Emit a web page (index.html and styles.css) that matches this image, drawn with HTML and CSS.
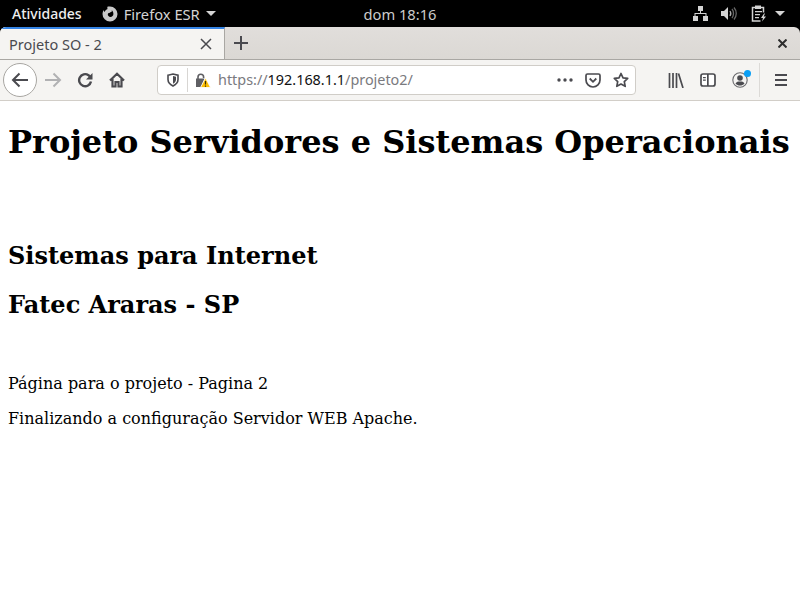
FILE: index.html
```html
<!DOCTYPE html>
<html lang="pt-BR">
<head>
    <meta charset="UTF-8">
    <title>Projeto SO - 2</title>
    <link rel="stylesheet" href="styles.css">
</head>
<body>
    <!-- GNOME top bar -->
    <header class="topbar">
        <div class="topbar-left">
            <span class="activities">Atividades</span>
            <span class="app-menu">
                <svg class="app-icon" width="16" height="16" viewBox="0 0 16 16"><path fill="#c9c9c9" fill-rule="evenodd" d="M8 .5A7.500 7.500 0 1 1 .5 8c0-1.500.4-2.800 1.200-4 .1 1 .5 1.700 1 2C3.100 4.500 4.400 3.300 5.600 3c-.5-.9-.4-1.800.2-2.500C6.500.5 7.200.5 8 .5zM9.500 4c.8 1 .4 1.800-.5 2-.8.200-1.400.5-1.500 1-.7-.2-1.500.3-1.700 1.100C5.600 9.700 6.900 11 8.400 11c1.700 0 3-1.400 3-3 0-1.700-.7-3.200-1.900-4z"/></svg>
                <span>Firefox ESR</span>
                <span class="caret"></span>
            </span>
        </div>
        <div class="clock">dom 18:16</div>
        <div class="topbar-right">
            <svg class="tray-net" width="15" height="15" viewBox="0 0 15 15"><path fill="#d4d4d4" d="M5 0h5v5H8v2h5.500v3H15v5H10v-5h2.500V8h-10v2H5v5H0v-5h1.500V7H7V5H5z"/></svg>
            <svg class="tray-vol" width="16" height="15" viewBox="0 0 16 15"><path fill="#d4d4d4" d="M0 5h3l4-4v13l-4-4H0z"/><path fill="none" stroke="#aaa" stroke-width="1.300" d="M9 5c1 1.500 1 3.500 0 5"/><path fill="none" stroke="#666" stroke-width="1.300" d="M11 3c2 2.500 2 6.500 0 9M13 1.500c3 3.500 3 8.500 0 12"/></svg>
            <svg class="tray-bat" width="16" height="17" viewBox="0 0 16 17"><path fill="none" stroke="#d4d4d4" stroke-width="1.500" d="M4 2.500H1.500v13.500h8M10 2.500h2.500v5"/><path fill="#d4d4d4" d="M4 .5h6v3.500H4zM4 6h7v1.300H4zM4 9h5v1.300H4zM4 12h4v1.300H4zM13 8.500l-3 4.500h2l-1 3.500 4-5h-2.300l1.300-3z"/></svg>
            <span class="caret"></span>
        </div>
    </header>

    <!-- Firefox tab strip -->
    <div class="tabstrip">
        <div class="tab">
            <span class="tab-title">Projeto SO - 2</span>
            <svg class="icon" width="12" height="12" viewBox="0 0 12 12"><path stroke="#4a4a4f" stroke-width="1.500" d="M1 1l10 10M11 1L1 11"/></svg>
        </div>
        <div class="newtab">
            <svg class="icon" width="14" height="14" viewBox="0 0 14 14"><path stroke="#4a4a4f" stroke-width="2" d="M7 0v14M0 7h14"/></svg>
        </div>
        <div class="window-close">
            <svg class="icon" width="9" height="9" viewBox="0 0 9 9"><path stroke="#2e2e2e" stroke-width="2" d="M.5.5l8 8M8.500.5l-8 8"/></svg>
        </div>
    </div>

    <!-- Firefox nav bar -->
    <nav class="navbar">
        <div class="back">
            <svg class="icon" width="18" height="16" viewBox="0 0 18 16"><path fill="none" stroke="#4a4a4f" stroke-width="2" d="M17 8H2M8.500 1.500L2 8l6.500 6.500"/></svg>
        </div>
        <div class="navbtn">
            <svg class="icon" width="18" height="16" viewBox="0 0 18 16"><path fill="none" stroke="#b1b1b3" stroke-width="2" d="M1 8h15M9.500 1.500L16 8l-6.500 6.500"/></svg>
        </div>
        <div class="navbtn">
            <svg class="icon" width="16" height="16" viewBox="0 0 16 16"><path fill="none" stroke="#4a4a4f" stroke-width="2.400" d="M14 9.500a6 6 0 1 1-2.500-6.300L14 5.500"/><path fill="#4a4a4f" d="M15.500 1v6.500h-6.500z"/></svg>
        </div>
        <div class="navbtn">
            <svg class="icon" width="16" height="16" viewBox="0 0 16 16"><path fill="none" stroke="#4a4a4f" stroke-width="2.200" d="M1 8.500l7-6.800 7 6.800M3.500 7v7.500h3V10h3v4.500h3V7"/></svg>
        </div>

        <div class="urlbar">
            <svg class="shield" width="12" height="14" viewBox="0 0 12 14"><path fill="none" stroke="#4a4a4f" stroke-width="1.600" d="M1 2.200L6 1l5 1.200v4.300c0 3-2 5-5 6.500-3-1.500-5-3.500-5-6.500z"/><path fill="#4a4a4f" d="M6 3l3 .8v2.700c0 1.800-1.200 3.200-3 4.300z"/></svg>
            <span class="url-sep"></span>
            <svg class="lock" width="16" height="15" viewBox="0 0 16 15"><path fill="none" stroke="#5f5f63" stroke-width="1.600" d="M3 6V4a2.800 2.800 0 0 1 5.600 0v1"/><path fill="#5f5f63" d="M1 5.500h8.500L6 14H1z"/><path fill="#ffbf00" stroke="#fff" stroke-width=".8" d="M10.500 5L15.500 14.500h-10z"/><path stroke="#3a3000" stroke-width="1.200" d="M10.500 8v3.500M10.500 12.500v1.200"/></svg>
            <span class="url"><span class="url-dim">https://</span>192.168.1.1<span class="url-dim">/projeto2/</span></span>
            <svg class="url-icon dots" width="16" height="4" viewBox="0 0 16 4"><circle cx="2" cy="2" r="1.700" fill="#4a4a4f"/><circle cx="8" cy="2" r="1.700" fill="#4a4a4f"/><circle cx="14" cy="2" r="1.700" fill="#4a4a4f"/></svg>
            <svg class="url-icon" width="16" height="15" viewBox="0 0 16 15"><path fill="none" stroke="#4a4a4f" stroke-width="1.700" d="M2.500 1h11c.8 0 1.500.7 1.500 1.500V7a7 7 0 0 1-14 0V2.500C1 1.700 1.700 1 2.500 1z"/><path fill="none" stroke="#4a4a4f" stroke-width="1.800" d="M4.700 5.500L8 8.800l3.300-3.300"/></svg>
            <svg class="url-icon" width="16" height="16" viewBox="0 0 16 16"><path fill="none" stroke="#4a4a4f" stroke-width="1.700" stroke-linejoin="round" d="M8 1.500l2 4.300 4.700.6-3.400 3.200.9 4.700L8 12l-4.200 2.300.9-4.700L1.300 6.400 6 5.800z"/></svg>
        </div>

        <div class="tools">
            <div class="navbtn">
                <svg class="icon" width="16" height="15" viewBox="0 0 16 15"><path stroke="#4a4a4f" stroke-width="1.700" d="M1.500 0v15M5 0v15M8.500 0v15M10.500.500l4.500 14.500"/></svg>
            </div>
            <div class="navbtn">
                <svg class="icon" width="16" height="14" viewBox="0 0 16 14"><rect x="1" y="1" width="14" height="12" rx="2" fill="#fff" stroke="#4a4a4f" stroke-width="1.700"/><path fill="#4a4a4f" d="M7 1h1.700v12H7zM3 4h2.800v1.200H3zM3 6.500h2.800v1.200H3z"/></svg>
            </div>
            <div class="navbtn account">
                <svg class="icon" width="16" height="16" viewBox="0 0 16 16"><circle cx="8" cy="8" r="7.200" fill="none" stroke="#6a6a6e" stroke-width="1.100"/><circle cx="8" cy="6" r="2.800" fill="#4a4a4f"/><path fill="#4a4a4f" d="M3.500 11.500C4.500 9.800 6 9.500 8 9.500s3.500.3 4.500 2C11 13 9.800 13.500 8 13.500s-3-.5-4.500-2z"/></svg>
                <span class="badge"></span>
            </div>
        </div>
        <span class="tools-sep"></span>
        <div class="navbtn">
            <svg class="icon" width="14" height="12" viewBox="0 0 14 12"><path stroke="#4a4a4f" stroke-width="2" d="M1 1h12M1 6h12M1 11h12"/></svg>
        </div>
    </nav>

    <main class="page">
        <h1>Projeto Servidores e Sistemas Operacionais</h1>
        <h2 class="first">Sistemas para Internet</h2>
        <h2>Fatec Araras - SP</h2>
        <p class="first">Página para o projeto - Pagina 2</p>
        <p>Finalizando a configuração Servidor WEB Apache.</p>
    </main>
</body>
</html>
```

FILE: styles.css
```css
html, body {
    margin: 0;
    height: 100%;
    overflow: hidden;
}
body {
    background-color: #000;
    font-family: "Noto Sans", sans-serif;
    display: flex;
    flex-direction: column;
}
.icon, .url-icon, .shield, .lock, .app-icon {
    display: block;
    flex: none;
}

.topbar {
    height: 27px;
    flex: none;
    display: grid;
    grid-template-columns: 1fr auto 1fr;
    align-items: center;
    color: #d4d4d4;
    font-size: 14.7px;
}
.topbar-left {
    display: flex;
    align-items: center;
    padding-left: 12px;
}
.activities {
    color: #eee;
    font-size: 14px;
    font-weight: 500;
}
.app-menu {
    display: flex;
    align-items: center;
    margin-left: 20px;
    gap: 6px;
}
.clock {
    color: #ccc;
}
.topbar-right {
    display: flex;
    align-items: center;
    justify-content: flex-end;
    padding-right: 15px;
}
.tray-net {
    margin-right: 13px;
}
.tray-vol {
    margin-right: 14px;
}
.tray-bat {
    margin-right: 8px;
}
.caret {
    width: 0;
    height: 0;
    border-left: 5px solid transparent;
    border-right: 5px solid transparent;
    border-top: 5px solid #d4d4d4;
}

.tabstrip {
    height: 33px;
    flex: none;
    display: flex;
    background: linear-gradient(#e1dedb, #dbd8d4);
    border-bottom: 1px solid #a9a7a3;
    box-sizing: border-box;
    border-radius: 6px 6px 0 0;
    overflow: hidden;
}
.tab {
    width: 225px;
    box-sizing: border-box;
    display: flex;
    align-items: center;
    justify-content: space-between;
    padding: 0 12px 2px 9px;
    background-color: #f5f4f2;
    border-top: 2px solid #3584e4;
    border-right: 1px solid #a9a7a3;
    margin-bottom: -1px;
    color: #4a4a4f;
    font-size: 14.5px;
}
.newtab {
    width: 32px;
    display: flex;
    align-items: center;
    justify-content: center;
}
.window-close {
    margin-left: auto;
    width: 36px;
    display: flex;
    align-items: center;
    justify-content: center;
}

.navbar {
    height: 41px;
    flex: none;
    box-sizing: border-box;
    display: flex;
    align-items: center;
    padding-left: 3px;
    background-color: #f5f4f2;
    border-bottom: 1px solid #d2cec8;
}
.back {
    width: 32px;
    height: 32px;
    flex: none;
    display: flex;
    align-items: center;
    justify-content: center;
    background-color: #fff;
    border: 1px solid #a8a6a2;
    border-radius: 50%;
}
.navbtn {
    width: 32px;
    height: 32px;
    flex: none;
    display: flex;
    align-items: center;
    justify-content: center;
    position: relative;
}
.urlbar {
    width: 479px;
    height: 30px;
    flex: none;
    box-sizing: border-box;
    margin-left: 24px;
    display: flex;
    align-items: center;
    padding-left: 9px;
    background-color: #fff;
    border: 1px solid #d0cdc8;
    border-radius: 4px;
}
.url-sep {
    width: 1px;
    height: 24px;
    margin: 0 7px 0 8px;
    background-color: #d8d6d3;
}
.url {
    margin-left: 7px;
    padding-bottom: 1px;
    font-size: 14.4px;
    color: #111;
}
.url-dim {
    color: #7a7a7e;
}
.dots {
    margin-left: auto;
}
.url-icon {
    margin-right: 12px;
}
.url-icon:last-child {
    margin-right: 6px;
}
.tools {
    display: flex;
    margin-left: 24px;
}
.badge {
    position: absolute;
    top: 6px;
    right: 5px;
    width: 7px;
    height: 7px;
    background-color: #0a9ff5;
    border-radius: 50%;
}
.tools-sep {
    width: 1px;
    height: 34px;
    margin: 0 5px 0 3px;
    background-color: #dcdad7;
}

.page {
    flex: 1;
    background-color: #fff;
    color: #000;
    font-family: "DejaVu Serif", serif;
    padding: 0 8px;
}
h1 {
    font-size: 32px;
    margin: 22px 0 21.44px;
    white-space: nowrap;
}
h2 {
    font-size: 24px;
    margin: 19.92px 0;
}
h2.first {
    margin-top: 80px;
}
p {
    font-size: 16px;
    margin: 16px 0;
}
p.first {
    margin-top: 55px;
}
```
